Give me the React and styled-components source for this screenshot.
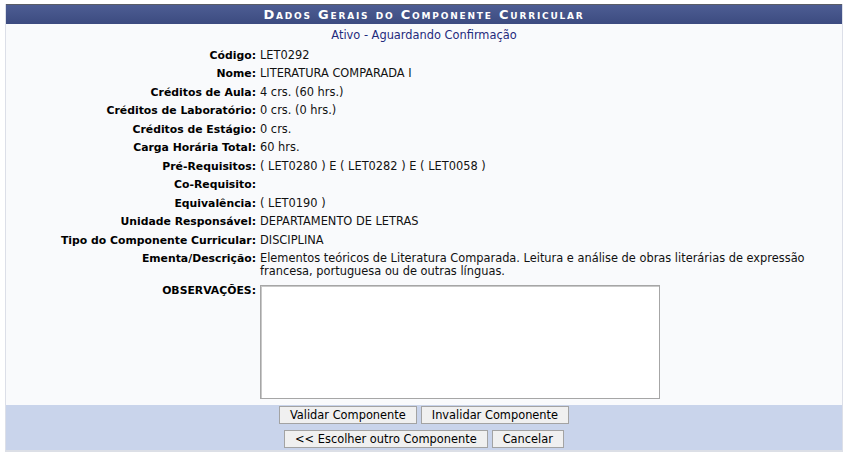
import styled, { createGlobalStyle } from "styled-components";

const GlobalStyle = createGlobalStyle`
  body {
    margin: 0;
    background: #ffffff;
    font-family: "DejaVu Sans", Verdana, sans-serif;
    font-size: 11.4px;
  }
`;

const fields = [
  ["Código", "LET0292"],
  ["Nome", "LITERATURA COMPARADA I"],
  ["Créditos de Aula", "4 crs. (60 hrs.)"],
  ["Créditos de Laboratório", "0 crs. (0 hrs.)"],
  ["Créditos de Estágio", "0 crs."],
  ["Carga Horária Total", "60 hrs."],
  ["Pré-Requisitos", "( LET0280 ) E ( LET0282 ) E ( LET0058 )"],
  ["Co-Requisito", ""],
  ["Equivalência", "( LET0190 )"],
  ["Unidade Responsável", "DEPARTAMENTO DE LETRAS"],
  ["Tipo do Componente Curricular", "DISCIPLINA"],
  [
    "Ementa/Descrição",
    "Elementos teóricos de Literatura Comparada. Leitura e análise de obras literárias de expressão francesa, portuguesa ou de outras línguas.",
  ],
];

export default function App() {
  return (
    <Page>
      <GlobalStyle />
      <Panel>
        <Caption>Dados Gerais do Componente Curricular</Caption>
        <Body>
          <Status>Ativo - Aguardando Confirmação</Status>
          <Fields>
            {fields.map(([label, value]) => (
              <Row key={label}>
                <Label>{label}:</Label>
                <Value>{value}</Value>
              </Row>
            ))}
            <Row>
              <Label>OBSERVAÇÕES:</Label>
              <Value>
                <Notes />
              </Value>
            </Row>
          </Fields>
        </Body>
        <Footer>
          <ButtonRow>
            <Button>Validar Componente</Button>
            <Button>Invalidar Componente</Button>
          </ButtonRow>
          <ButtonRow>
            <Button>&lt;&lt; Escolher outro Componente</Button>
            <Button>Cancelar</Button>
          </ButtonRow>
        </Footer>
      </Panel>
    </Page>
  );
}

const Page = styled.div`
  padding: 4px 3px 0 5px;
`;

const Panel = styled.div`
  border-left: 1px solid #dcdfe8;
  border-right: 1px solid #dcdfe8;
  border-bottom: 2px solid #dcdfe6;
`;

const Caption = styled.div`
  height: 19px;
  border-top: 1px solid #5a5d66;
  background: linear-gradient(#4d5d93, #3c4b80);
  color: #ffffff;
  font-weight: bold;
  font-variant: small-caps;
  font-size: 13px;
  letter-spacing: 1.8px;
  line-height: 20px;
  text-align: center;
`;

const Body = styled.div`
  background: #f9fafc;
  padding-top: 5px;
  padding-bottom: 3px;
`;

const Status = styled.div`
  color: #1f2a7c;
  text-align: center;
  line-height: 13px;
  margin-bottom: 4px;
`;

const Fields = styled.div`
  display: grid;
  grid-template-columns: 250px 1fr;
  column-gap: 4px;
`;

const Row = styled.div`
  display: contents;
`;

const Label = styled.div`
  text-align: right;
  font-weight: bold;
  font-size: 10.85px;
  color: #000000;
  line-height: 13px;
  padding: 2.75px 0;
  white-space: nowrap;
`;

const Value = styled.div`
  color: #111111;
  line-height: 13px;
  padding: 2.75px 30px 2.75px 0;
`;

const Notes = styled.textarea`
  display: block;
  width: 400px;
  height: 114px;
  box-sizing: border-box;
  border: 1px solid #a6a6a6;
  box-shadow: inset 1px 1px 0 #c8c8c8;
  background: #ffffff;
  resize: none;
  margin: 1px 0 0;
`;

const Footer = styled.div`
  background: #c9d4eb;
  padding: 1px 0 2px;
  display: flex;
  flex-direction: column;
  align-items: center;
  gap: 6px;
`;

const ButtonRow = styled.div`
  display: flex;
  gap: 4px;
`;

const Button = styled.button`
  font-family: "DejaVu Sans", Verdana, sans-serif;
  font-size: 11.4px;
  color: #000000;
  background: #f0f0f0;
  border: 1px solid #a3a3a3;
  height: 18px;
  padding: 0 10px;
  line-height: 14px;
  margin: 0;
`;
